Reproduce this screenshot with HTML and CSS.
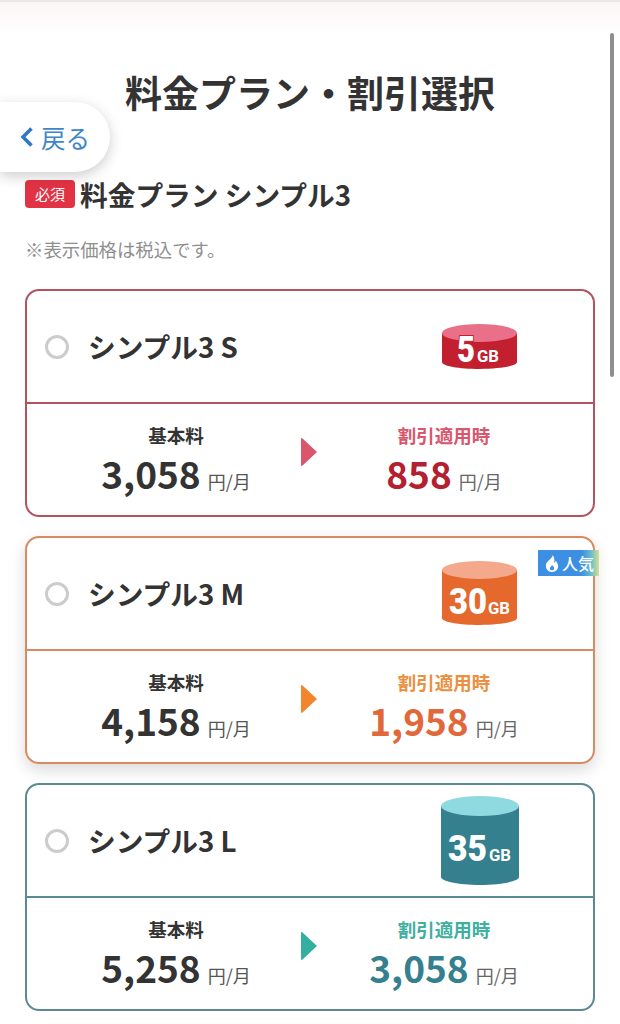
FILE: index.html
```html
<!DOCTYPE html>
<html lang="ja">

<head>
    <meta charset="utf-8" />
    <meta name="viewport" content="width=device-width, initial-scale=1.0" />
    <title>料金プラン・割引選択</title>
    <link rel="stylesheet" href="styles.css">
</head>

<body>
    <div class="top-band"></div>
    <div class="scrollbar"></div>
    <a class="btn-back" href="javascript:void(0)">
        <svg class="btn-back-icon" width="16" height="24" viewBox="0 0 16 24"><path d="M12.5 3.500 4 12l8.500 8.500" fill="none" stroke="#2f78c4" stroke-width="3.600" /></svg>
        <span>戻る</span>
    </a>
    <h1 class="page-title">料金プラン・割引選択</h1>
    <div class="section-head">
        <span class="badge-required">必須</span>
        <h2 class="section-title">料金プラン シンプル3</h2>
    </div>
    <p class="note">※表示価格は税込です。</p>

    <div class="plan-list">
        <!-- S -->
        <div class="plan plan-s">
            <div class="plan-top">
                <span class="radio"></span>
                <span class="plan-name">シンプル3 S</span>
                <svg class="plan-icon" width="78" height="46" viewBox="0 0 78 46">
                    <path d="M1 9v29c0 4 17 7 37.500 7s37.500-3 37.500-7V9z" fill="#c3202f" />
                    <ellipse cx="38.500" cy="9" rx="37.500" ry="9" fill="#ea7089" />
                    <text x="16" y="38" class="gb-num gb-num-s" textLength="18" lengthAdjust="spacingAndGlyphs">5</text>
                    <text x="36" y="38" class="gb-unit" textLength="22" lengthAdjust="spacingAndGlyphs">GB</text>
                </svg>
            </div>
            <div class="plan-bottom">
                <div class="price-col">
                    <div class="price-label">基本料</div>
                    <div class="price"><b>3,058</b><span>円/月</span></div>
                </div>
                <svg class="arrow" width="18" height="30" viewBox="0 0 18 30"><path d="M2 1 17 15 2 29a1 1 0 0 1-1-1V2a1 1 0 0 1 1-1z" fill="#d9566c" /></svg>
                <div class="price-col">
                    <div class="price-label off">割引適用時</div>
                    <div class="price off-price"><b>858</b><span>円/月</span></div>
                </div>
            </div>
        </div>
        <!-- M -->
        <div class="plan plan-m">
            <span class="badge-popular">
                <svg width="14" height="17" viewBox="0 0 14 17"><path d="M7.500 0c.6 3-5.500 5.500-6.500 9.500C.3 13.500 3 17 7 17s6.800-3 6-7c-.4-2-1.500-3.300-2.300-4.300-.2 1.200-.7 2-1.500 2.500C9.700 5 9.500 2 7.500 0zM7 10c1.500 1.500 2.500 2.500 2 4-.3 1-1.200 1.300-2 1.300-1.300 0-2.300-1-2-2.300.2-1 1.500-1.700 2-3z" fill="#fff" fill-rule="evenodd" /></svg>
                人気
            </span>
            <div class="plan-top">
                <span class="radio"></span>
                <span class="plan-name">シンプル3 M</span>
                <svg class="plan-icon" width="78" height="65" viewBox="0 0 78 65">
                    <path d="M1 9v48c0 4 17 7 37.500 7s37.500-3 37.500-7V9z" fill="#e5682c" />
                    <ellipse cx="38.500" cy="9" rx="37.500" ry="9" fill="#f4a98c" />
                    <text x="8" y="53" class="gb-num" textLength="38" lengthAdjust="spacingAndGlyphs">30</text>
                    <text x="47" y="53" class="gb-unit" textLength="22" lengthAdjust="spacingAndGlyphs">GB</text>
                </svg>
            </div>
            <div class="plan-bottom">
                <div class="price-col">
                    <div class="price-label">基本料</div>
                    <div class="price"><b>4,158</b><span>円/月</span></div>
                </div>
                <svg class="arrow" width="18" height="30" viewBox="0 0 18 30"><path d="M2 1 17 15 2 29a1 1 0 0 1-1-1V2a1 1 0 0 1 1-1z" fill="#f0872f" /></svg>
                <div class="price-col">
                    <div class="price-label off">割引適用時</div>
                    <div class="price off-price"><b>1,958</b><span>円/月</span></div>
                </div>
            </div>
        </div>
        <!-- L -->
        <div class="plan plan-l">
            <div class="plan-top">
                <span class="radio"></span>
                <span class="plan-name">シンプル3 L</span>
                <svg class="plan-icon plan-icon-l" width="80" height="90" viewBox="0 0 80 90">
                    <path d="M1 10v71c0 4 17 8 39 8s39-4 39-8V10z" fill="#35808f" />
                    <ellipse cx="40" cy="10" rx="39" ry="10" fill="#8fdae0" />
                    <text x="8" y="65" class="gb-num" textLength="39" lengthAdjust="spacingAndGlyphs">35</text>
                    <text x="49" y="65" class="gb-unit" textLength="22" lengthAdjust="spacingAndGlyphs">GB</text>
                </svg>
            </div>
            <div class="plan-bottom">
                <div class="price-col">
                    <div class="price-label">基本料</div>
                    <div class="price"><b>5,258</b><span>円/月</span></div>
                </div>
                <svg class="arrow" width="18" height="30" viewBox="0 0 18 30"><path d="M2 1 17 15 2 29a1 1 0 0 1-1-1V2a1 1 0 0 1 1-1z" fill="#35b0a0" /></svg>
                <div class="price-col">
                    <div class="price-label off">割引適用時</div>
                    <div class="price off-price"><b>3,058</b><span>円/月</span></div>
                </div>
            </div>
        </div>
    </div>
</body>

</html>
```

FILE: styles.css
```css
html, body {
    margin: 0;
    padding: 0;
    height: 1024px;
    overflow: hidden;
}
body {
    position: relative;
    background-color: #fff;
    color: #333;
    font-family: "Noto Sans CJK JP", "Noto Sans", sans-serif;
}
a {
    text-decoration: none;
}
.top-band {
    height: 34px;
    border-top: 2px solid #ece6e7;
    box-sizing: border-box;
    background: linear-gradient(#fbf5f6, #fff);
}
.scrollbar {
    position: absolute;
    top: 33px;
    left: 610px;
    width: 4px;
    height: 344px;
    border-radius: 2px;
    background-color: #8f8f8f;
}
.btn-back {
    position: absolute;
    top: 102px;
    left: 0;
    width: 110px;
    height: 70px;
    box-sizing: border-box;
    padding-left: 19px;
    display: flex;
    align-items: center;
    gap: 6px;
    border-radius: 0 35px 35px 0;
    background-color: #fff;
    box-shadow: 0 4px 14px rgba(0, 0, 0, 0.2);
    color: #3f86c9;
    font-size: 24.500px;
}
.btn-back-icon {
    flex: none;
}
.page-title {
    margin: 33px 0 0;
    height: 50px;
    line-height: 50px;
    text-align: center;
    font-size: 37px;
    font-weight: 700;
}
.section-head {
    margin: 63px 0 0 25px;
    height: 28px;
    display: flex;
    align-items: center;
    gap: 5px;
}
.badge-required {
    flex: none;
    width: 50px;
    height: 28px;
    line-height: 28px;
    border-radius: 4px;
    background-color: #e23345;
    color: #fff;
    text-align: center;
    font-size: 15px;
}
.section-title {
    margin: 0;
    font-size: 27.700px;
    font-weight: 700;
    line-height: 28px;
    white-space: nowrap;
}
.note {
    margin: 27px 0 0 25px;
    height: 28px;
    line-height: 28px;
    font-size: 18.400px;
    color: #8f8f8f;
}
.plan-list {
    margin: 26px 25px 0;
    display: flex;
    flex-direction: column;
    gap: 19px;
}
.plan {
    position: relative;
    height: 228px;
    box-sizing: border-box;
    border: 2px solid;
    border-radius: 14px;
    background-color: #fff;
}
.plan-s { border-color: #b5525f; }
.plan-m { border-color: #d98a62; box-shadow: 0 6px 16px rgba(0, 0, 0, 0.15); }
.plan-l { border-color: #5c8a92; }
.plan-top {
    height: 113px;
    box-sizing: border-box;
    padding: 0 74px 0 18px;
    display: flex;
    align-items: center;
    border-bottom: 2px solid;
}
.plan-s .plan-top { border-bottom-color: #b5525f; }
.plan-m .plan-top { border-bottom-color: #d98a62; }
.plan-l .plan-top { border-bottom-color: #5c8a92; }
.radio {
    width: 24px;
    height: 24px;
    box-sizing: border-box;
    border: 3px solid #ccc;
    border-radius: 50%;
    margin-right: 19px;
    flex: none;
}
.plan-name {
    flex: 1;
    margin-bottom: 2px;
    font-size: 27.700px;
    font-weight: 700;
    white-space: nowrap;
}
.plan-icon {
    flex: none;
}
.plan-icon-l {
    margin-right: -1px;
}
.gb-num {
    fill: #fff;
    font-family: "Roboto", sans-serif;
    font-size: 36px;
    font-weight: 900;
}
.gb-num-s {
    stroke: #c3202f;
    stroke-width: 2px;
    paint-order: stroke;
}
.gb-unit {
    fill: #fff;
    font-family: "Roboto", sans-serif;
    font-size: 16px;
    font-weight: 700;
}
.plan-bottom {
    height: 111px;
    box-sizing: border-box;
    padding: 0 24px;
    display: grid;
    grid-template-columns: 1fr 18px 1fr;
    align-items: center;
}
.arrow {
    margin: 0 0 15px -1px;
}
.price-col {
    text-align: center;
}
.price-label {
    height: 26px;
    line-height: 26px;
    font-size: 18.500px;
    font-weight: 700;
}
.price {
    height: 50px;
    line-height: 50px;
    white-space: nowrap;
}
.price b {
    font-size: 37px;
    font-weight: 700;
    margin-right: 7px;
}
.price span {
    font-size: 18px;
    color: #555;
}
.plan-s .off { color: #d9566c; }
.plan-s .off-price b { color: #b4202f; }
.plan-m .off { color: #ea9040; }
.plan-m .off-price b { color: #e0683a; }
.plan-l .off { color: #3fb0a0; }
.plan-l .off-price b { color: #35808f; }
.off-price span { color: #666; }
.badge-popular {
    position: absolute;
    top: 12px;
    right: -6px;
    width: 61px;
    height: 26px;
    display: flex;
    align-items: center;
    gap: 3px;
    box-sizing: border-box;
    padding-left: 7px;
    background: linear-gradient(90deg, #3d8fe4 0, #3d8fe4 72%, #6fc0c8 88%, #d8e090 100%);
    color: #fff;
    font-size: 16px;
    font-weight: 500;
    white-space: nowrap;
}
```
